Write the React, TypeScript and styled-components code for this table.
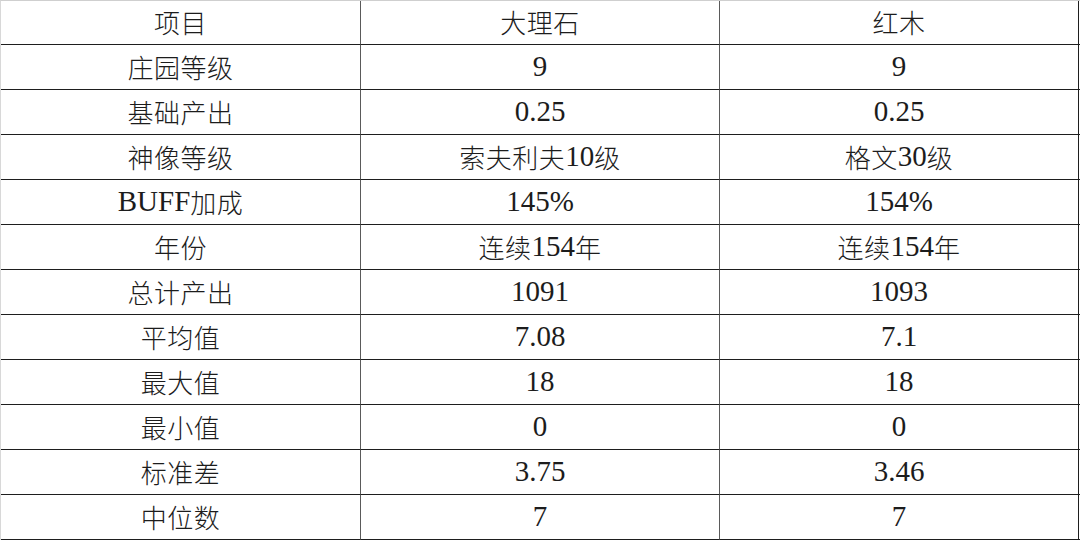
import React from "react";
import styled, { createGlobalStyle } from "styled-components";

const Global = createGlobalStyle`
  html, body { margin: 0; padding: 0; background: #fff; }
`;

const Table = styled.div`
  width: 1080px;
  height: 540px;
  box-sizing: border-box;
  border-top: 1px solid #cfcfcf;
  border-left: 1px solid #d8d8d8;
  display: grid;
  grid-template-columns: 360px 359px 359px 1px;
  grid-template-rows: 44px repeat(11, 45px);
  color: #1c1c1c;
`;

const Cell = styled.div<{ $last?: boolean }>`
  box-sizing: border-box;
  display: flex;
  align-items: center;
  justify-content: center;
  border-bottom: 1px solid #1e1e1e;
  border-right: 1px solid ${(p) => (p.$last ? "#1e1e1e" : "#5a5a5a")};
  white-space: nowrap;
  line-height: 1;
  padding-bottom: 1px;
`;

const Cjk = styled.span`
  font-family: "Noto Sans CJK SC", sans-serif;
  font-weight: 300;
  font-size: 26px;
  letter-spacing: 0.5px;
`;

const Latin = styled.span`
  font-family: "Liberation Serif", serif;
  font-size: 29px;
`;

const Edge = styled.div`
  background: #fff;
  border-bottom: 1px solid #1e1e1e;
  box-sizing: border-box;
`;

const rows: [string, string, string][] = [
  ["项目", "大理石", "红木"],
  ["庄园等级", "9", "9"],
  ["基础产出", "0.25", "0.25"],
  ["神像等级", "索夫利夫10级", "格文30级"],
  ["BUFF加成", "145%", "154%"],
  ["年份", "连续154年", "连续154年"],
  ["总计产出", "1091", "1093"],
  ["平均值", "7.08", "7.1"],
  ["最大值", "18", "18"],
  ["最小值", "0", "0"],
  ["标准差", "3.75", "3.46"],
  ["中位数", "7", "7"],
];

function Text({ value }: { value: string }) {
  const parts = value.match(/[\u4e00-\u9fff]+|[^\u4e00-\u9fff]+/g) || [];
  return (
    <>
      {parts.map((p, i) =>
        /[\u4e00-\u9fff]/.test(p) ? <Cjk key={i}>{p}</Cjk> : <Latin key={i}>{p}</Latin>
      )}
    </>
  );
}

export default function App() {
  return (
    <>
      <Global />
      <Table>
        {rows.map((r, i) => (
          <React.Fragment key={i}>
            <Cell><Text value={r[0]} /></Cell>
            <Cell><Text value={r[1]} /></Cell>
            <Cell $last><Text value={r[2]} /></Cell>
            <Edge />
          </React.Fragment>
        ))}
      </Table>
    </>
  );
}
